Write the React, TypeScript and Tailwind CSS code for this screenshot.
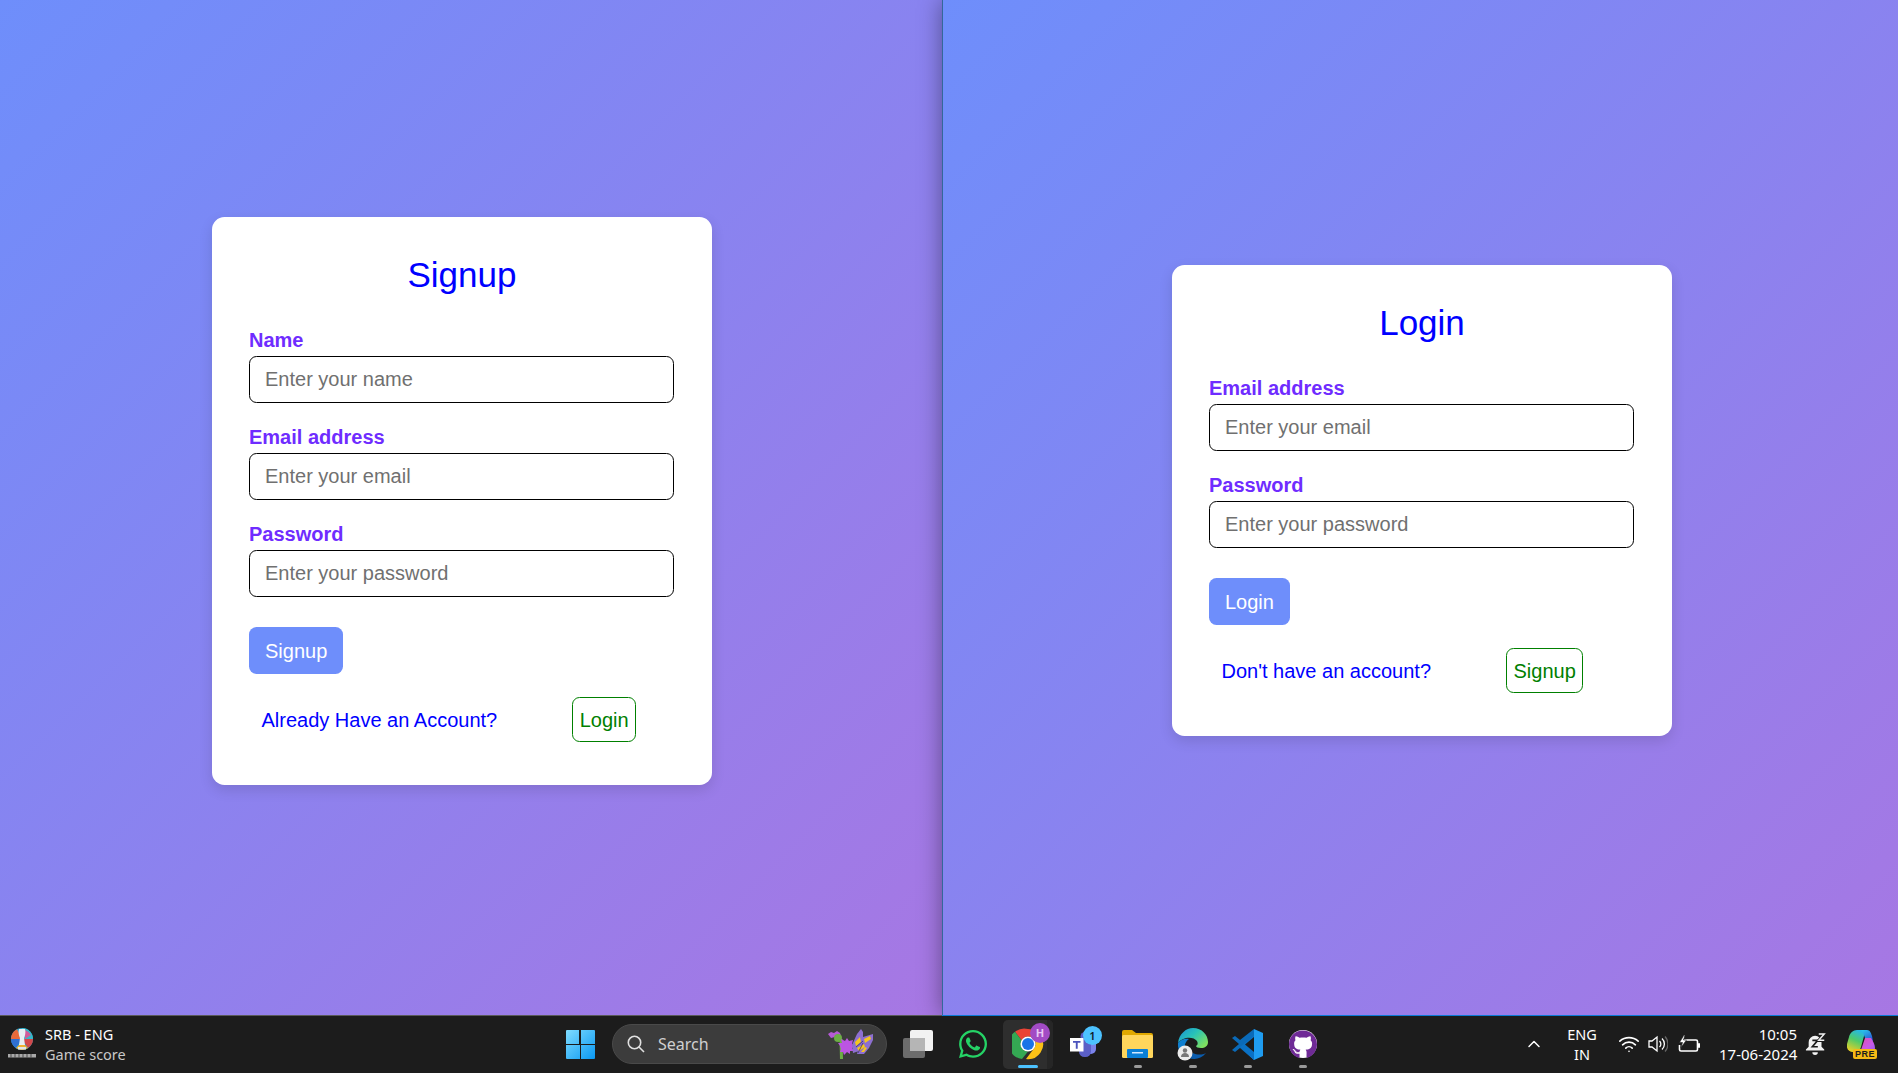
import React from "react";
import { FaWhatsapp, FaGithub } from "react-icons/fa";
import { ChevronUp, Wifi } from "lucide-react";

function Field({ label, placeholder }: { label: string; placeholder: string }) {
  return (
    <div className="mb-[20px]">
      <label className="block h-[30px] text-[20px] leading-[28px] font-bold text-[#6f2cff]">{label}</label>
      <input
        readOnly
        placeholder={placeholder}
        className="block box-border w-[425px] h-[47px] px-[15px] rounded-[7.5px] border border-black bg-white text-[20px] outline-none placeholder:text-[#707070]"
      />
    </div>
  );
}

function Card({
  title,
  fields,
  action,
  question,
  alt,
}: {
  title: string;
  fields: [string, string][];
  action: string;
  question: string;
  alt: string;
}) {
  return (
    <div className="w-[500px] box-border bg-white rounded-[12.5px] pt-[37px] px-[37px] pb-[43px] shadow-[0_5px_14px_rgba(0,0,0,0.12)] font-['Liberation_Sans',Arial,sans-serif]">
      <h2 className="text-center text-[35px] leading-[42px] text-[#0000ff] mb-[30px]">{title}</h2>
      {fields.map(([l, p]) => (
        <Field key={l} label={l} placeholder={p} />
      ))}
      <button className="block mt-[30px] h-[47px] px-4 rounded-[7.5px] bg-[#6e8efb] text-white text-[20px]">{action}</button>
      <div className="flex items-center gap-[75px] mt-[23px] pl-[12.5px]">
        <a className="text-[20px] text-[#0000ff]">{question}</a>
        <button className="h-[45px] px-[6.5px] rounded-[7.5px] border border-[#008000] text-[#008000] text-[20px]">{alt}</button>
      </div>
    </div>
  );
}

function Pip({ active }: { active?: boolean }) {
  return (
    <span
      className={
        active
          ? "absolute left-1/2 -translate-x-1/2 bottom-[1px] w-[20px] h-[3px] rounded-full bg-[#4cc2ff]"
          : "absolute left-1/2 -translate-x-1/2 bottom-[1px] w-[8px] h-[3px] rounded-full bg-[#9a9a9a]"
      }
    />
  );
}

function Cell({ children, pip, active }: { children: React.ReactNode; pip?: boolean; active?: boolean }) {
  return (
    <div className="relative w-[55px] h-[49px] flex items-center justify-center">
      {children}
      {pip && <Pip active={active} />}
    </div>
  );
}

function WinLogo() {
  return (
    <svg width="29" height="29" viewBox="0 0 29 29">
      <defs>
        <linearGradient id="wl" x1="0" y1="0" x2="1" y2="1">
          <stop offset="0" stopColor="#7fdcff" />
          <stop offset="1" stopColor="#0a98f2" />
        </linearGradient>
      </defs>
      <path d="M1 0h12v14H0V1a1 1 0 0 1 1-1zM15 0h13a1 1 0 0 1 1 1v13H15zM0 15h14v14H1a1 1 0 0 1-1-1zM15 15h14v13a1 1 0 0 1-1 1H15z" fill="url(#wl)" />
    </svg>
  );
}

function EuroLogo() {
  return (
    <svg width="28" height="32" viewBox="0 0 28 32">
      <circle cx="14" cy="11" r="11" fill="#2a9fc4" />
      <path d="M14 0a11 11 0 0 1 11 11H14z" fill="#35b8c9" />
      <path d="M3 11a11 11 0 0 1 6-9.8L14 11z" fill="#e86a3a" />
      <path d="M3 11a11 11 0 0 0 5 9l6-9z" fill="#2f6fd0" />
      <path d="M25 11a11 11 0 0 1-5 9l-6-9z" fill="#d2484a" />
      <path d="M8 20a11 11 0 0 0 12 0l-6-6z" fill="#f0b030" />
      <path d="M17 2a11 11 0 0 1 6 5l-6 4z" fill="#d25a9a" />
      <path d="M11 1h6c1 3 0 7-1 9l1 7h-6l1-7c-1-2-2-6-1-9z" fill="#e9eef3" />
      <rect x="10" y="19" width="8" height="2.5" fill="#dfe5ea" />
      <rect x="0" y="26" width="28" height="3.5" fill="#a8a8a8" />
      <path d="M3 26v3.5M7 26v3.5M11 26v3.5M15 26v3.5M19 26v3.5M23 26v3.5" stroke="#333" strokeWidth="0.8" />
    </svg>
  );
}

function Blossom() {
  return (
    <svg width="46" height="30" viewBox="0 0 46 30">
      <path d="M13 10 L13.5 30" stroke="#6cae45" strokeWidth="3" fill="none" />
      <path d="M0 5l3-2 3 1 3-2 3 2 1 3-6 1-4 1z" fill="#b65ad6" />
      <circle cx="10" cy="9" r="4" fill="#6cae45" />
      <path d="M12 17l-2-3 4 0-1-4 4 2 2-3 2 3 4-1-1 4 3 2-3 2 2 3-4 0 0 3-3-2-3 3-1-3-3 0 1-3z" fill="#bb55e2" />
      <path d="M24 16 L29 5 L33 0 L35 3 L35 14 L31 22 L25 24z" fill="#8d6fd0" />
      <path d="M35 8 L45 5 L45 11 L41 19 L36 25 L29 25 L31 18z" fill="#8d6fd0" />
      <path d="M27 13l5-5 1 5-5 4zM36 10l6-3 1 3-6 4zM29 19l7-4 1 3-6 4zM33 23l4-5 2 1-3 4z" fill="#f4c61f" />
      <path d="M28 18l7-6M30 24l5-10" stroke="#3c3070" strokeWidth="0.8" />
    </svg>
  );
}

function TaskView() {
  return (
    <svg width="30" height="28" viewBox="0 0 30 28">
      <rect x="0" y="8" width="22" height="20" rx="2" fill="#6c6c6c" />
      <rect x="7" y="0" width="23" height="21" rx="2" fill="#f2f2f2" />
      <rect x="7" y="8" width="15" height="13" fill="#b5b5b5" />
    </svg>
  );
}

function Chrome() {
  return (
    <svg width="32" height="32" viewBox="0 0 32 32">
      <path d="M16 1a15 15 0 0 1 13 7.5H16a7.5 7.5 0 0 0-6.5 3.8L3 3.8A15 15 0 0 1 16 1z" fill="#ea4335" />
      <path d="M3 3.8l6.5 8.5a7.5 7.5 0 0 0 6.5 11.2L10 31A15 15 0 0 1 3 3.8z" fill="#34a853" />
      <path d="M29 8.5A15 15 0 0 1 14 31l8.5-11.2A7.5 7.5 0 0 0 16 8.5z" fill="#fbc116" />
      <circle cx="16" cy="16" r="7.6" fill="#fff" />
      <circle cx="16" cy="16" r="6" fill="#1a73e8" />
    </svg>
  );
}

function Teams() {
  return (
    <svg width="36" height="34" viewBox="0 0 36 34">
      <rect x="20" y="11" width="11" height="16" rx="5" fill="#7b83eb" />
      <circle cx="20" cy="9.5" r="4.5" fill="#5b5fc7" />
      <rect x="14" y="12" width="12" height="18" rx="5.5" fill="#5b5fc7" />
      <rect x="5" y="11" width="13.5" height="13.5" fill="#fff" />
      <path d="M8 14h7.5v1.8h-2.8v6h-1.9v-6H8z" fill="#4b53bc" />
    </svg>
  );
}

function Folder() {
  return (
    <svg width="31" height="28" viewBox="0 0 31 28">
      <path d="M0 2a2 2 0 0 1 2-2h8l4 3h15a2 2 0 0 1 2 2v3H0z" fill="#e0a800" />
      <rect x="0" y="5" width="31" height="23" rx="1.5" fill="#ffd65c" />
      <rect x="5" y="19" width="21" height="9" rx="1" fill="#0a7fd6" />
      <rect x="10" y="22" width="11" height="1.5" fill="#cfe8ff" />
    </svg>
  );
}

function Edge() {
  return (
    <svg width="32" height="33" viewBox="0 0 32 33">
      <defs>
        <linearGradient id="eg" x1="0" y1="0" x2="1" y2="0.7">
          <stop offset="0" stopColor="#1a8fd8" />
          <stop offset="0.5" stopColor="#28c3b8" />
          <stop offset="1" stopColor="#7fe05f" />
        </linearGradient>
      </defs>
      <path d="M1 15C2 6 9 0 16 0c9 0 15 7 15 14 0 4-3 6-7 6-3 0-5-1-5-2 2-1 2-3 1-5-2-3-7-4-11-3-4 1-7 3-8 5z" fill="url(#eg)" />
      <path d="M1 15c2-3 7-5 11-4-3 2-5 6-4 10 1 4 5 8 10 9-9 2-18-5-17-15z" fill="#0f7fd0" />
      <path d="M12 30c6 2 12 1 17-5-4 2-9 2-13 0z" fill="#0b5cad" />
      <circle cx="8" cy="25" r="7.5" fill="#ececec" />
      <circle cx="8" cy="22.5" r="2.2" fill="#777" />
      <path d="M4 29c0-3 2-4 4-4s4 1 4 4z" fill="#777" />
    </svg>
  );
}

function VSCode() {
  return (
    <svg width="31" height="31" viewBox="0 0 31 31">
      <path d="M22 0l9 4v23l-9 4-14-13 14-11V0z" fill="#1f9cf0" />
      <path d="M22 0v31L8 19 3 23 0 21l7-6-7-6 3-2 5 4z" fill="#0a6fc2" opacity="0.95" />
      <path d="M22 8v15l-9-7.5z" fill="#1c1c1c" />
    </svg>
  );
}

function Github() {
  return (
    <div className="relative w-[28px] h-[28px] rounded-full bg-white flex items-center justify-center">
      <FaGithub className="text-[#6f2b96]" size={29} />
    </div>
  );
}

function Volume() {
  return (
    <svg width="20" height="18" viewBox="0 0 20 18" fill="none" stroke="#fff" strokeWidth="1.3">
      <path d="M1 6h3l5-4v14l-5-4H1z" />
      <path d="M11.5 6a4 4 0 0 1 0 6M14 3.5a7.5 7.5 0 0 1 0 11" />
      <path d="M17 1.5a11 11 0 0 1 0 15" stroke="#666" />
    </svg>
  );
}

function Battery() {
  return (
    <svg width="22" height="18" viewBox="0 0 22 18">
      <path d="M6 5h12a1.5 1.5 0 0 1 1.5 1.5v8A1.5 1.5 0 0 1 18 16H3a1.5 1.5 0 0 1-1.5-1.5V10" fill="none" stroke="#fff" strokeWidth="1.6" />
      <rect x="20" y="8" width="2" height="5" rx="1" fill="#fff" />
      <path d="M6 0L1.5 7.5h3L3 12.5l5.5-7.5h-3L7 0z" fill="#fff" stroke="#1c1c1c" strokeWidth="0.6" />
    </svg>
  );
}

function Bell() {
  return (
    <svg width="22" height="24" viewBox="0 0 24 26">
      <path d="M11 4a7 7 0 0 0-7 7v5l-3 3v1h20v-1l-3-3v-5a7 7 0 0 0-7-7z" fill="#f2f2f2" />
      <path d="M8 22h6a3 3 0 0 1-6 0z" fill="#f2f2f2" />
      <path d="M8 9h6l-6 7h6" stroke="#1c1c1c" strokeWidth="1.8" fill="none" />
      <path d="M15 2h6l-6 7h6" stroke="#1c1c1c" strokeWidth="3.4" fill="none" />
      <path d="M15 2h6l-6 7h6" stroke="#f2f2f2" strokeWidth="1.6" fill="none" />
    </svg>
  );
}

function Copilot() {
  return (
    <div className="relative w-[30px] h-[30px]">
      <svg width="28" height="24" viewBox="0 0 28 24" className="absolute left-0 top-0">
        <defs>
          <linearGradient id="c1" x1="0.2" y1="0" x2="0.8" y2="1">
            <stop offset="0" stopColor="#2bc3e8" />
            <stop offset="1" stopColor="#2a50d8" />
          </linearGradient>
          <linearGradient id="c2" x1="0" y1="0" x2="1" y2="1">
            <stop offset="0" stopColor="#e24fa8" />
            <stop offset="0.6" stopColor="#c85ae8" />
            <stop offset="1" stopColor="#8a5cf0" />
          </linearGradient>
          <linearGradient id="c3" x1="0.6" y1="0" x2="0.2" y2="1">
            <stop offset="0" stopColor="#25b8e8" />
            <stop offset="0.45" stopColor="#4ecb6a" />
            <stop offset="1" stopColor="#f5d020" />
          </linearGradient>
        </defs>
        <path d="M10 1C6 1 3 4 2 8L0 15c-1 5 2 8 6 8h3c3 0 4-2 5-5l3-11c1-3 2-5 3-6z" fill="url(#c3)" />
        <path d="M14 1h6c3 0 4 3 5 6l1 5h-7l-2-6c-1-3-2-4-3-5z" fill="url(#c1)" />
        <path d="M18 9h6c2 3 4 7 4 10s-3 5-6 5H11c2-1 3-3 4-6z" fill="url(#c2)" />
      </svg>
      <span className="absolute left-[6px] top-[20px] w-[24px] h-[10px] rounded-[2px] bg-[#f5b915] text-[#1c1c1c] text-[9px] leading-[10px] font-bold text-center tracking-[0.5px] font-['Liberation_Sans',sans-serif]">
        PRE
      </span>
    </div>
  );
}

function Taskbar() {
  return (
    <div className="relative z-20 h-[58px] flex items-center bg-[#1c1c1c] text-white font-['Noto_Sans','Open_Sans',sans-serif]">
      <div className="absolute left-0 right-0 top-0 flex h-[1px]">
        <div className="w-[942px] bg-[#5a5a5a]" />
        <div className="flex-1 bg-[#0a7ad6]" />
      </div>
      <div className="w-[566px] shrink-0 flex items-center pl-[8px] gap-[9px]">
        <EuroLogo />
        <div className="text-[14.5px] leading-[20px]">
          <div className="text-white">SRB - ENG</div>
          <div className="text-[#c8c8c8]">Game score</div>
        </div>
      </div>
      <WinLogo />
      <div className="ml-[17px] w-[275px] h-[40px] rounded-full bg-[#3c3c3c] border border-[#4a4a4a] flex items-center pl-[14px] pr-[12px]">
        <svg width="18" height="18" viewBox="0 0 18 18" fill="none" stroke="#e0e0e0" strokeWidth="1.6">
          <circle cx="7.5" cy="7.5" r="6.2" />
          <path d="M12 12l5 5" />
        </svg>
        <span className="ml-[13px] text-[16px] text-[#cfcfcf]">Search</span>
        <span className="ml-auto flex">
          <Blossom />
        </span>
      </div>
      <div className="ml-[3px] flex items-center">
        <Cell>
          <TaskView />
        </Cell>
        <Cell>
          <FaWhatsapp className="text-[#25d366]" size={32} />
        </Cell>
        <Cell pip active>
          <div className="absolute left-[3px] top-0 w-[50px] h-[49px] rounded-[5px] bg-[#2e2e2e]" />
          <div className="absolute left-[47px] top-0 w-[6px] h-[49px] rounded-r-[5px] bg-[#262626]" />
          <div className="relative">
            <Chrome />
          </div>
          <div className="absolute left-[30px] top-[3px] w-[20px] h-[20px] rounded-full bg-[#a24bc4] text-[#e8c8f5] text-[11px] leading-[20px] font-bold text-center">H</div>
        </Cell>
        <Cell>
          <Teams />
          <div className="absolute left-[28px] top-[6px] w-[19px] h-[19px] rounded-full bg-[#4cc2ff] text-[#10202a] text-[11px] leading-[19px] font-semibold text-center">1</div>
        </Cell>
        <Cell pip>
          <Folder />
        </Cell>
        <Cell pip>
          <Edge />
        </Cell>
        <Cell pip>
          <VSCode />
        </Cell>
        <Cell pip>
          <Github />
        </Cell>
      </div>
      <div className="ml-auto pr-[21px] flex items-center">
        <ChevronUp size={20} strokeWidth={1.8} className="text-white" />
        <div className="ml-[18px] w-[40px] text-center text-[14.5px] leading-[20px]">
          <div>ENG</div>
          <div>IN</div>
        </div>
        <Wifi size={22} strokeWidth={1.8} className="ml-[16px] text-white" />
        <div className="ml-[8px] flex">
          <Volume />
        </div>
        <div className="ml-[10px] flex">
          <Battery />
        </div>
        <div className="ml-[19px] w-[78px] text-right text-[15px] leading-[20px] whitespace-nowrap">
          <div>10:05</div>
          <div>17-06-2024</div>
        </div>
        <div className="ml-[8px] flex">
          <Bell />
        </div>
        <div className="ml-[20px] flex">
          <Copilot />
        </div>
      </div>
    </div>
  );
}

export default function App() {
  return (
    <div className="w-[1898px] h-[1073px] flex flex-col overflow-hidden">
      <div className="flex-1 flex">
        <div className="w-[942px] flex items-center justify-center pr-[18px] pb-[13px] bg-[linear-gradient(135deg,#6e8efb,#a777e3)]">
          <Card
            title="Signup"
            fields={[
              ["Name", "Enter your name"],
              ["Email address", "Enter your email"],
              ["Password", "Enter your password"],
            ]}
            action="Signup"
            question="Already Have an Account?"
            alt="Login"
          />
        </div>
        <div className="relative z-10 flex-1 flex items-center justify-center pl-[3px] pb-[14px] border-l border-[#34689a] shadow-[0_0_22px_rgba(0,0,0,0.4)] bg-[linear-gradient(135deg,#6e8efb,#a777e3)]">
          <Card
            title="Login"
            fields={[
              ["Email address", "Enter your email"],
              ["Password", "Enter your password"],
            ]}
            action="Login"
            question="Don't have an account?"
            alt="Signup"
          />
        </div>
      </div>
      <Taskbar />
    </div>
  );
}
